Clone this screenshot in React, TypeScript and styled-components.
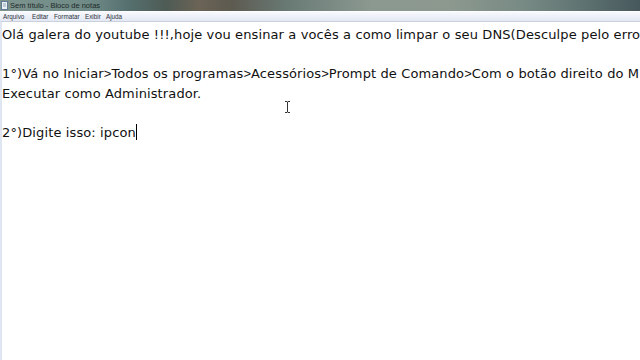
import React from "react";
import styled, { createGlobalStyle } from "styled-components";

const Global = createGlobalStyle`
  html, body { margin: 0; padding: 0; width: 640px; height: 360px; overflow: hidden; background: #fff; }
  #root { width: 640px; height: 360px; }
`;

const Window = styled.div`
  width: 640px;
  height: 360px;
  display: flex;
  flex-direction: column;
  overflow: hidden;
`;

const TitleBar = styled.div`
  height: 11px;
  flex: none;
  display: flex;
  align-items: center;
  gap: 2px;
  padding-left: 1px;
  background: linear-gradient(90deg, #7d938e 0%, #6f8a86 14%, #55706f 20%, #4e5b55 26%, #6b6356 31%, #5d5a50 36%, #697a75 45%, #8b9990 58%, #8d998f 70%, #778a84 82%, #5c706f 92%, #47585c 100%);
  font-family: "Liberation Sans", Arial, sans-serif;
  font-size: 7.5px;
  color: #1d2a2a;
`;

const AppIcon = styled.svg`
  width: 7px;
  height: 9px;
  flex: none;
`;

const MenuBar = styled.div`
  height: 9px;
  flex: none;
  display: flex;
  align-items: center;
  padding-left: 3px;
  background: linear-gradient(#f7f9fd, #e3e8f3);
  border-top: 1px solid #fdfdff;
  font-family: "Liberation Sans", Arial, sans-serif;
  font-size: 6.3px;
  color: #2a2f3a;
`;

const MenuItem = styled.span<{ $w: number }>`
  flex: none;
  width: ${(p) => p.$w}px;
`;

const Editor = styled.div`
  flex: 1;
  display: flex;
  border-top: 1px solid #c9d1df;
  border-left: 2px solid #dfe6f2;
  background: #fff;
  position: relative;
`;

const TextArea = styled.div`
  flex: 1;
  padding-top: 3px;
  font-family: "DejaVu Sans", sans-serif;
  font-size: 13px;
  letter-spacing: 0.12px;
  line-height: 19.5px;
  color: #111;
  white-space: pre;
  overflow: hidden;
`;

const Line = styled.div`
  height: 19.5px;
`;

const Gt = styled.span`
  font-family: "Liberation Sans", Arial, sans-serif;
  letter-spacing: 0;
`;

const Caret = styled.span`
  display: inline-block;
  width: 1px;
  height: 16px;
  background: #000;
  vertical-align: -3px;
`;

const IBeam = styled.svg`
  position: absolute;
  left: 282px;
  top: 79px;
  width: 7px;
  height: 12px;
`;

const withGt = (s: string) =>
  s.split(">").flatMap((part, i) => (i === 0 ? [part] : [<Gt key={i}>&gt;</Gt>, part]));

const lines = [
  "Olá galera do youtube !!!,hoje vou ensinar a vocês a como limpar o seu DNS(Desculpe pelo erro",
  "",
  "1°)Vá no Iniciar>Todos os programas>Acessórios>Prompt de Comando>Com o botão direito do M",
  "Executar como Administrador.",
  "",
];

export default function App() {
  return (
    <>
      <Global />
      <Window>
        <TitleBar>
          <AppIcon viewBox="0 0 7 9">
            <rect x="0.5" y="0.5" width="6" height="8" fill="#e9f0f6" stroke="#5f7b95" strokeWidth="1" />
            <line x1="2" y1="3" x2="5" y2="3" stroke="#7f95aa" strokeWidth="0.8" />
            <line x1="2" y1="5" x2="5" y2="5" stroke="#7f95aa" strokeWidth="0.8" />
          </AppIcon>
          <span>Sem título - Bloco de notas</span>
        </TitleBar>
        <MenuBar>
          <MenuItem $w={29}>Arquivo</MenuItem>
          <MenuItem $w={22}>Editar</MenuItem>
          <MenuItem $w={31}>Formatar</MenuItem>
          <MenuItem $w={21}>Exibir</MenuItem>
          <MenuItem $w={20}>Ajuda</MenuItem>
        </MenuBar>
        <Editor>
          <TextArea>
            {lines.map((l, i) => (
              <Line key={i}>{withGt(l)}</Line>
            ))}
            <Line>
              2°)Digite isso: ipcon<Caret />
            </Line>
          </TextArea>
          <IBeam viewBox="0 0 7 12">
            <path d="M1 0.5h2l0.5 0.5l0.5-0.5h2M3.5 1v10M1 11.5h2l0.5-0.5l0.5 0.5h2" stroke="#333" strokeWidth="1" fill="none" />
          </IBeam>
        </Editor>
      </Window>
    </>
  );
}
